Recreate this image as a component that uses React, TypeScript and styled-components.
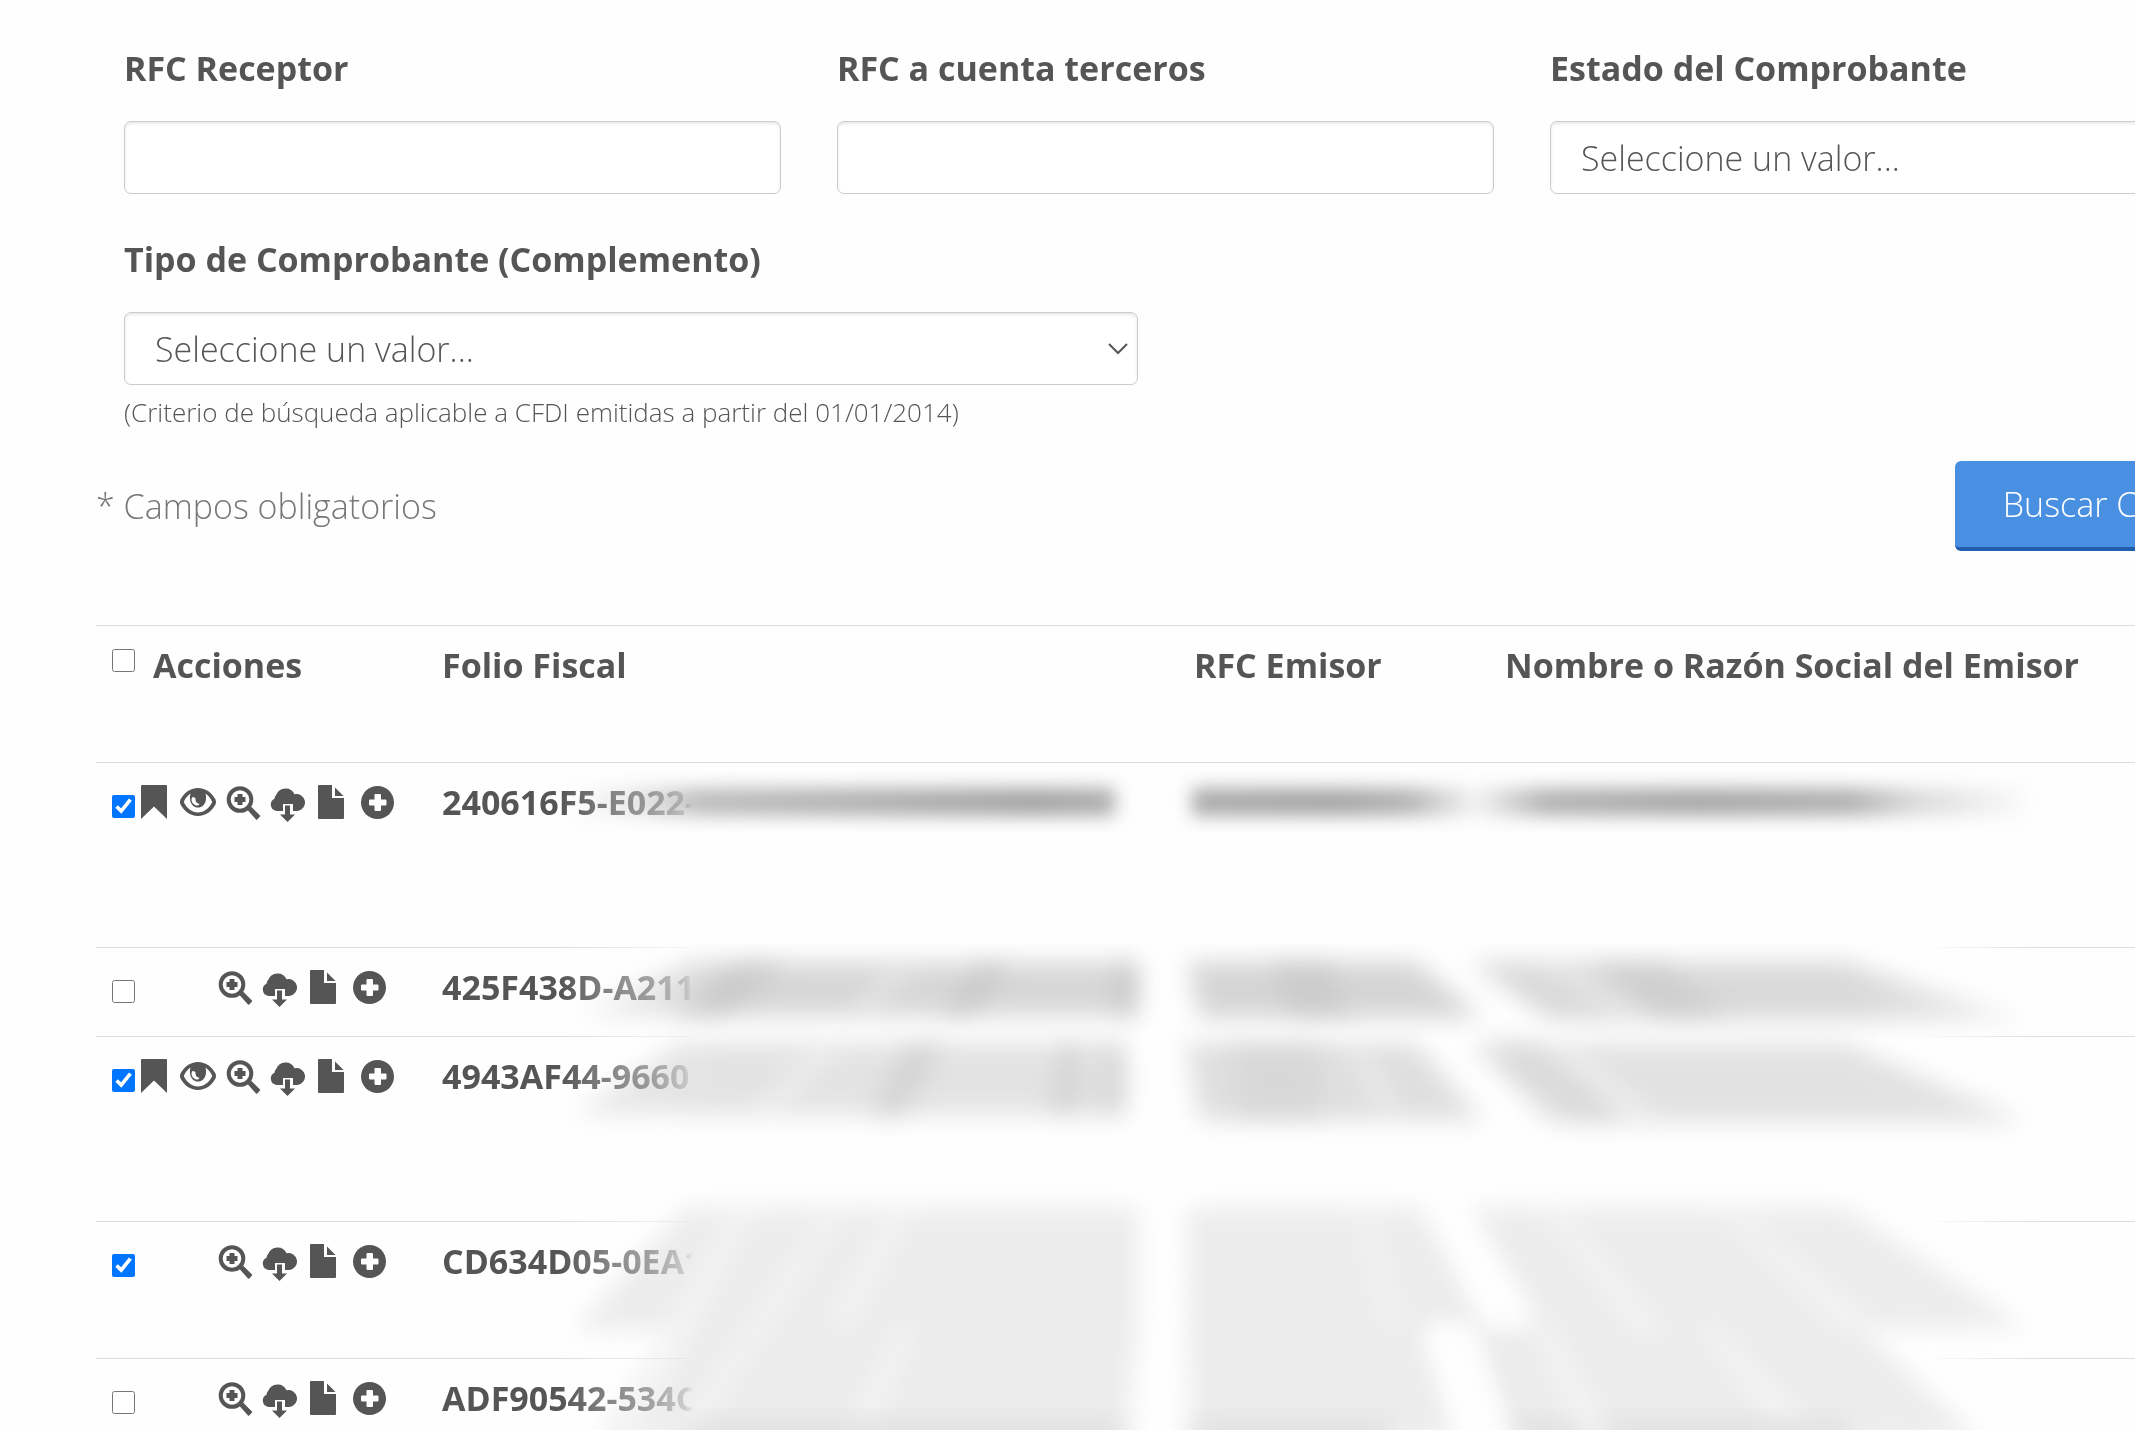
import React, { useState } from "react";
import styled, { createGlobalStyle } from "styled-components";

const ink = "#555555";

const GlobalStyle = createGlobalStyle`
  *, *::before, *::after { box-sizing: border-box; }
  body {
    margin: 0;
    background: #fefefe;
    color: ${ink};
    font-family: "Open Sans", "Noto Sans", sans-serif;
    font-size: 34px;
    font-weight: 300;
    line-height: 48px;
  }
`;

const Page = styled.div`
  height: 100vh;
  overflow: hidden;
`;

const Container = styled.main`
  margin: 44px -100px 0 96px;
`;

const FieldRow = styled.div`
  display: grid;
  grid-template-columns: repeat(3, 1fr);
  gap: 56px;
  padding: 0 28px;
  margin-bottom: 41px;
`;

const WideRow = styled.div`
  width: 50%;
  padding: 0 28px;
`;

const Field = styled.div`
  display: flex;
  flex-direction: column;
`;

const Label = styled.label`
  font-weight: 700;
  margin-bottom: 29px;
`;

const control = `
  display: block;
  width: 100%;
  height: 73px;
  margin: 0;
  padding: 0 30px;
  border: 1px solid #cccccc;
  border-radius: 7px;
  background: #ffffff;
  box-shadow: inset 0 2px 3px rgba(0, 0, 0, 0.09);
  color: ${ink};
  font: inherit;
`;

const TextInput = styled.input`${control}`;

const Select = styled.select`
  ${control}
  appearance: none;
`;

const SelectBox = styled.div`
  position: relative;
`;

const Chevron = styled.svg`
  position: absolute;
  right: 10px;
  top: 30px;
  width: 20px;
  height: 14px;
  pointer-events: none;
`;

const Hint = styled.p`
  margin: 9px 0 0;
  font-size: 26px;
  line-height: 36px;
`;

const FormFooter = styled.div`
  display: flex;
  align-items: center;
  justify-content: space-between;
  margin: 31px 0 74px;
`;

const Required = styled.p`
  margin: 0;
  color: #777777;
`;

const SearchButton = styled.button`
  height: 90px;
  padding: 0 48px;
  border: 0;
  border-bottom: 4px solid #1f5fae;
  border-radius: 6px;
  background: #4a90e2;
  color: #ffffff;
  font: inherit;
`;

const Results = styled.section`
  position: relative;
`;

const Table = styled.table`
  width: 100%;
  table-layout: fixed;
  border-collapse: collapse;
`;

const Col = styled.col<{ $width?: number }>`
  width: ${(p) => (p.$width ? `${p.$width}px` : "auto")};
`;

const Row = styled.tr<{ $lines: number }>`
  height: ${(p) => 41 + 48 * p.$lines}px;
  border-top: 1px solid #dddddd;
`;

const Head = styled.th`
  padding: 15px 15px 0;
  text-align: left;
  vertical-align: top;
  font-weight: 700;
  white-space: nowrap;
`;

const ActionsHead = styled(Head)`
  padding-left: 18px;
`;

const Cell = styled.td`
  padding: 15px 15px 0;
  vertical-align: top;
  font-weight: 700;
  white-space: nowrap;
`;

const CheckHead = styled.th`
  padding: 23px 0 0 16px;
  vertical-align: top;
  line-height: 0;
`;

const CheckCell = styled.td`
  padding: 32px 0 0 16px;
  vertical-align: top;
  line-height: 0;
`;

const Check = styled.input`
  width: 23px;
  height: 23px;
  margin: 0;
`;

const ActionsCell = styled.td`
  padding: 22px 0 0;
  vertical-align: top;
`;

const Actions = styled.div<{ $short: boolean }>`
  display: flex;
  gap: 9px;
  padding-left: ${(p) => (p.$short ? 82 : 0)}px;
`;

const IconButton = styled.button`
  display: block;
  width: 36px;
  height: 38px;
  padding: 0;
  border: 0;
  background: none;
  color: ${ink};
`;

const Veil = styled.svg`
  position: absolute;
  left: 0;
  top: 138px;
  width: 2039px;
  height: 667px;
  pointer-events: none;
`;

const Smears = styled(Veil)`
  mix-blend-mode: multiply;
`;

type IconName = "bookmark" | "eye" | "zoom" | "cloud" | "file" | "plus";

const shapes: Record<IconName, React.ReactNode> = {
  bookmark: <path d="M7 0H31Q32 0 32 1V34L19 21.500L6 34V1Q6 0 7 0Z" />,
  eye: (
    <>
      <path
        fillRule="evenodd"
        d="M18 3C26 3 32 8 35.500 14.500Q36.500 17 35.500 19.500C32 26 26 31 18 31S4 26 .5 19.500Q-.5 17 .5 14.500C4 8 10 3 18 3ZM10.500 8.500C7.500 10.500 5 13.500 3.800 17C6.500 23 12 27.500 18 27.500S29.500 23 32.200 17C31 13.500 28.500 10.500 25.500 8.500C27.500 16 24 22.500 18 22.500S8.500 16 10.500 8.500Z"
      />
      <path d="M12.500 12Q16 12 15.500 14.500Q15.500 18 19.500 19Q18.500 21 16 20.500Q12 19 11.500 15Q11.500 13 12.500 12Z" fill="#fefefe" />
    </>
  ),
  zoom: (
    <>
      <circle cx="15" cy="14.500" r="11.300" fill="none" stroke="currentColor" strokeWidth="4" />
      <path d="M12.500 9H17.500V12H20.500V17H17.500V20H12.500V17H9.500V12H12.500Z" />
      <path d="M22.500 25L26 21.500L35 30.500Q35.500 31 35 31.500L32 34.700Q31.500 35 31 34.500Z" />
    </>
  ),
  cloud: (
    <>
      <path d="M6.500 26A6.500 6.500 0 0 1 4.500 13.700A6 6 0 0 1 6.300 9.800A9.800 9.800 0 0 1 24.500 9.300A8.500 8.500 0 1 1 27.500 26H23V19H13V26Z" />
      <path d="M15 20.500H20V29.500H25L17.500 37L10 29.500H15Z" />
    </>
  ),
  file: (
    <>
      <path d="M4 0H17V13H29V33Q29 34 28 34H4Q3 34 3 33V1Q3 0 4 0Z" />
      <path d="M20 2.500L28.500 11H20Z" />
    </>
  ),
  plus: (
    <>
      <circle cx="17.500" cy="17.500" r="16.500" />
      <path d="M15 9H20Q21 9 21 10V14.500H25.500Q26.500 14.500 26.500 15.500V19.500Q26.500 20.500 25.500 20.500H21V25Q21 26 20 26H15.500Q14.500 26 14.500 25V20.500H10Q9 20.500 9 19.500V15.500Q9 14.500 10 14.500H14.500V10Q14.500 9 15 9Z" fill="#fefefe" />
    </>
  ),
};

const iconTitles: Record<IconName, string> = {
  bookmark: "Marcar",
  eye: "Ver",
  zoom: "Ver detalle",
  cloud: "Descargar",
  file: "Documento",
  plus: "Agregar",
};

const allIcons: IconName[] = ["bookmark", "eye", "zoom", "cloud", "file", "plus"];
const shortIcons = allIcons.slice(2);

interface Invoice {
  folio: string;
  checked: boolean;
  full: boolean;
  lines: number;
}

const invoices: Invoice[] = [
  { folio: "240616F5-E022-", checked: true, full: true, lines: 3 },
  { folio: "425F438D-A211", checked: false, full: false, lines: 1 },
  { folio: "4943AF44-9660", checked: true, full: true, lines: 3 },
  { folio: "CD634D05-0EA1", checked: true, full: false, lines: 2 },
  { folio: "ADF90542-534C", checked: false, full: false, lines: 2 },
];

function InvoiceRow({ invoice }: { invoice: Invoice }) {
  const [checked, setChecked] = useState(invoice.checked);
  const icons = invoice.full ? allIcons : shortIcons;
  return (
    <Row $lines={invoice.lines}>
      <CheckCell>
        <Check
          type="checkbox"
          aria-label={`Seleccionar ${invoice.folio}`}
          checked={checked}
          onChange={() => setChecked(!checked)}
        />
      </CheckCell>
      <ActionsCell>
        <Actions $short={!invoice.full}>
          {icons.map((name) => (
            <IconButton key={name} type="button" aria-label={iconTitles[name]}>
              <svg width="36" height="38" viewBox="0 0 36 38" fill="currentColor" aria-hidden="true">
                {shapes[name]}
              </svg>
            </IconButton>
          ))}
        </Actions>
      </ActionsCell>
      <Cell>{invoice.folio}</Cell>
      <Cell />
      <Cell />
    </Row>
  );
}

/* White veil and smudges that hide the private part of each record. */
function PrivacySmears() {
  return (
    <>
      <Veil viewBox="96 763 2039 667" aria-hidden="true">
        <defs>
          <linearGradient id="veil" gradientUnits="userSpaceOnUse" x1="560" x2="2040" y1="0" y2="0">
            <stop offset="0" stopColor="#fefefe" stopOpacity="0" />
            <stop offset="0.034" stopColor="#fefefe" stopOpacity="0.3" />
            <stop offset="0.061" stopColor="#fefefe" stopOpacity="0.5" />
            <stop offset="0.085" stopColor="#fefefe" stopOpacity="0.8" />
            <stop offset="0.09" stopColor="#fefefe" />
            <stop offset="0.92" stopColor="#fefefe" />
            <stop offset="1" stopColor="#fefefe" stopOpacity="0" />
          </linearGradient>
        </defs>
        <rect x="560" y="763" width="1480" height="667" fill="url(#veil)" />
      </Veil>
      <Smears viewBox="96 763 2039 667" aria-hidden="true">
        <defs>
          <filter id="soft" x="-10%" y="-60%" width="120%" height="220%">
            <feGaussianBlur stdDeviation="9" />
          </filter>
          <filter id="softer" x="-10%" y="-30%" width="120%" height="160%">
            <feGaussianBlur stdDeviation="12" />
          </filter>
          <linearGradient id="folio1" gradientUnits="userSpaceOnUse" x1="570" x2="1117" y1="0" y2="0">
            <stop offset="0" stopColor="#b2b2b2" stopOpacity="0" />
            <stop offset="0.12" stopColor="#b2b2b2" stopOpacity="0.3" />
            <stop offset="0.24" stopColor="#b2b2b2" stopOpacity="0.85" />
            <stop offset="0.5" stopColor="#b4b4b4" />
            <stop offset="0.85" stopColor="#a4a4a4" />
            <stop offset="1" stopColor="#b0b0b0" />
          </linearGradient>
          <linearGradient id="rfc1" gradientUnits="userSpaceOnUse" x1="1192" x2="1480" y1="0" y2="0">
            <stop offset="0" stopColor="#acacac" />
            <stop offset="0.5" stopColor="#a6a6a6" />
            <stop offset="0.75" stopColor="#b4b4b4" />
            <stop offset="1" stopColor="#b8b8b8" stopOpacity="0.1" />
          </linearGradient>
          <linearGradient id="name1" gradientUnits="userSpaceOnUse" x1="1480" x2="2025" y1="0" y2="0">
            <stop offset="0" stopColor="#b4b4b4" stopOpacity="0.2" />
            <stop offset="0.12" stopColor="#b4b4b4" />
            <stop offset="0.4" stopColor="#a8a8a8" />
            <stop offset="0.68" stopColor="#b2b2b2" />
            <stop offset="0.8" stopColor="#b8b8b8" stopOpacity="0.5" />
            <stop offset="1" stopColor="#b8b8b8" stopOpacity="0.05" />
          </linearGradient>
          <linearGradient id="tail2" gradientUnits="userSpaceOnUse" x1="570" x2="720" y1="0" y2="0">
            <stop offset="0" stopColor="#d8d8d8" stopOpacity="0.2" />
            <stop offset="1" stopColor="#d8d8d8" />
          </linearGradient>
          <linearGradient id="tail3" gradientUnits="userSpaceOnUse" x1="570" x2="720" y1="0" y2="0">
            <stop offset="0" stopColor="#e2e2e2" stopOpacity="0.7" />
            <stop offset="1" stopColor="#e4e4e4" />
          </linearGradient>
          <linearGradient id="fade" gradientUnits="userSpaceOnUse" x1="1850" x2="2030" y1="0" y2="0">
            <stop offset="0" stopColor="#dadada" />
            <stop offset="1" stopColor="#dadada" stopOpacity="0.4" />
          </linearGradient>
        </defs>

        <g filter="url(#soft)">
          <path d="M570 788H1115V816H570Z" fill="url(#folio1)" />
          <path d="M1192 788H1480V816H1192Z" fill="url(#rfc1)" />
          <path d="M1480 788H2025V816H1480Z" fill="url(#name1)" />
        </g>

        <g filter="url(#softer)">
          <path d="M690 962H1137V1016H575Z" fill="url(#tail2)" />
          <path d="M1188 962H1416L1482 1018H1200Z" fill="#d6d6d6" />
          <path d="M1470 962H1845L2025 1020H1550Z" fill="url(#fade)" />
        </g>
        <g filter="url(#softer)" opacity="0.4">
          <path d="M740 964H790L720 1016H670ZM980 964H1010L970 1016H940Z" fill="#b8b8b8" />
          <path d="M1270 964H1330L1350 1016H1290ZM1590 964H1660L1730 1016H1660Z" fill="#bfbfbf" />
          <path d="M1118 964H1134V1014H1118Z" fill="#a8a8a8" />
          <path d="M895 964H915L870 1016H850ZM1535 960H1555L1650 1020H1620Z" fill="#ffffff" />
        </g>

        <g filter="url(#softer)">
          <path d="M680 1043H1124V1114H575Z" fill="url(#tail3)" />
          <path d="M1186 1043H1416L1482 1120H1200Z" fill="#e0e0e0" />
          <path d="M1470 1043H1845L2025 1122H1550Z" fill="#e3e3e3" />
        </g>
        <g filter="url(#softer)" opacity="0.5">
          <path d="M905 1046H945L900 1116H870ZM1060 1046H1080V1112H1050ZM1106 1046H1122V1112H1100Z" fill="#c6c6c6" />
          <path d="M1230 1046H1320V1116H1240ZM1490 1046H1530L1625 1118H1575Z" fill="#d2d2d2" />
          <path d="M820 1046H840L770 1116H750ZM1350 1046H1362L1400 1118H1385ZM1545 1040H1562L1660 1122H1635Z" fill="#ffffff" />
        </g>

        <g filter="url(#softer)">
          <path d="M685 1208H1138V1320L1126 1440H600L670 1330H575Z" fill="#ededed" />
          <path d="M1188 1208H1420L1485 1327H1420L1455 1440H1190Z" fill="#ededed" />
          <path d="M1470 1208H1845L2025 1328H1860L1980 1440H1510L1465 1322H1540Z" fill="#ededed" />
        </g>
        <g filter="url(#softer)" opacity="0.5">
          <path d="M738 1205H755L640 1430H610ZM832 1205H845L770 1325H750ZM895 1205H912L850 1325H830ZM750 1325H765L700 1430H680ZM900 1325H915L870 1430H850Z" fill="#ffffff" />
          <path d="M1542 1205H1556L1665 1335H1640ZM1715 1205H1728L1880 1330H1845ZM1535 1325H1550L1605 1430H1580ZM1700 1325H1715L1810 1430H1780Z" fill="#ffffff" />
          <path d="M1358 1205H1368L1400 1325H1385Z" fill="#ffffff" />
        </g>
        <g filter="url(#soft)" opacity="0.7">
          <path d="M1430 1325H1475L1510 1440H1465ZM1440 1205H1460L1530 1330H1490Z" fill="#ffffff" />
        </g>
        <g filter="url(#softer)" opacity="0.5">
          <path d="M690 1420H1125V1460H680ZM1192 1420H1390V1460H1192ZM1510 1420H1570L1600 1460H1530ZM1600 1420H1850V1460H1620Z" fill="#d4d4d4" />
        </g>
      </Smears>
    </>
  );
}

export default function App() {
  return (
    <>
      <GlobalStyle />
      <Page>
        <Container>
          <form onSubmit={(e) => e.preventDefault()}>
            <FieldRow>
              <Field>
                <Label htmlFor="receptor">RFC Receptor</Label>
                <TextInput id="receptor" type="text" />
              </Field>
              <Field>
                <Label htmlFor="terceros">RFC a cuenta terceros</Label>
                <TextInput id="terceros" type="text" />
              </Field>
              <Field>
                <Label htmlFor="estado">Estado del Comprobante</Label>
                <Select id="estado">
                  <option>Seleccione un valor...</option>
                </Select>
              </Field>
            </FieldRow>
            <WideRow>
              <Field>
                <Label htmlFor="tipo">Tipo de Comprobante (Complemento)</Label>
                <SelectBox>
                  <Select id="tipo">
                    <option>Seleccione un valor...</option>
                  </Select>
                  <Chevron viewBox="0 0 20 14" aria-hidden="true">
                    <path d="M1 2L10 11L19 2" fill="none" stroke={ink} strokeWidth="2" />
                  </Chevron>
                </SelectBox>
                <Hint>(Criterio de búsqueda aplicable a CFDI emitidas a partir del 01/01/2014)</Hint>
              </Field>
            </WideRow>
            <FormFooter>
              <Required>* Campos obligatorios</Required>
              <SearchButton type="submit">Buscar CFDI</SearchButton>
            </FormFooter>
          </form>

          <Results>
            <Table>
              <colgroup>
                <Col $width={39} />
                <Col $width={292} />
                <Col $width={752} />
                <Col $width={311} />
                <Col />
              </colgroup>
              <thead>
                <Row $lines={2}>
                  <CheckHead>
                    <Check type="checkbox" aria-label="Seleccionar todos" />
                  </CheckHead>
                  <ActionsHead>Acciones</ActionsHead>
                  <Head>Folio Fiscal</Head>
                  <Head>RFC Emisor</Head>
                  <Head>Nombre o Razón Social del Emisor</Head>
                </Row>
              </thead>
              <tbody>
                {invoices.map((invoice) => (
                  <InvoiceRow key={invoice.folio} invoice={invoice} />
                ))}
              </tbody>
            </Table>
            <PrivacySmears />
          </Results>
        </Container>
      </Page>
    </>
  );
}
